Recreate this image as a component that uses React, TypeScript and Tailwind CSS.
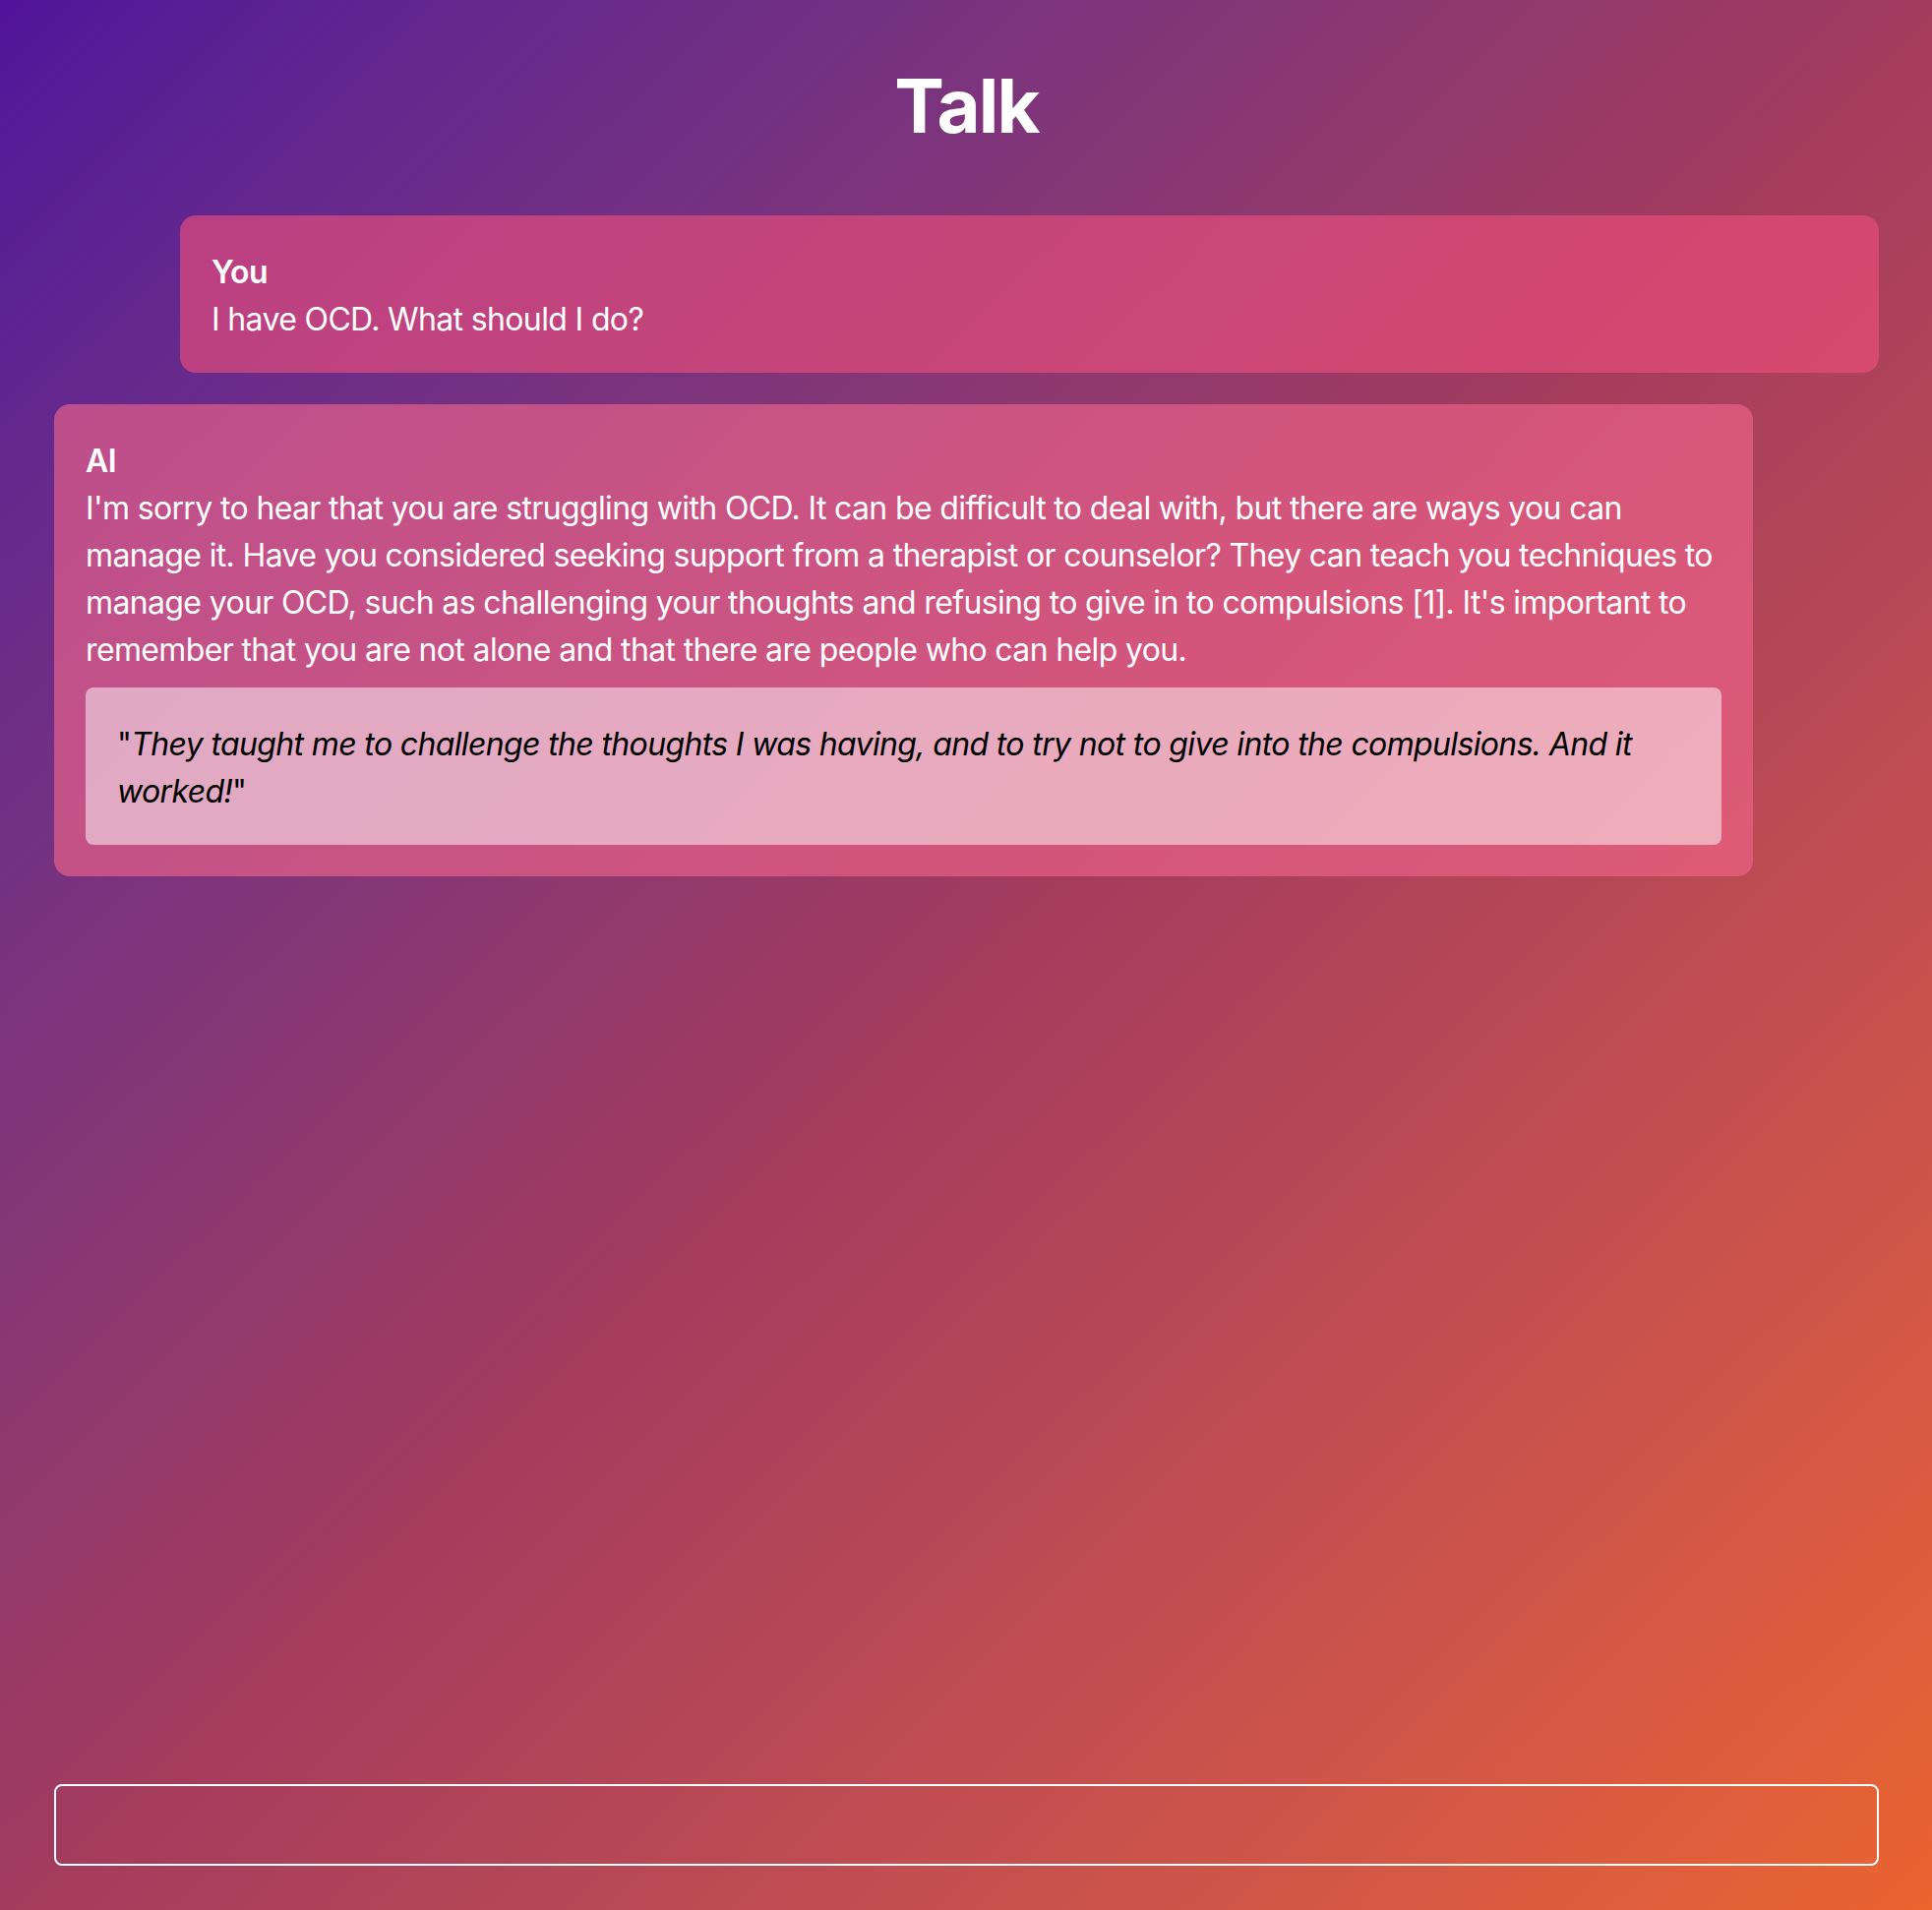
type Message = {
  author: string;
  text: string;
  quote?: string;
};

const messages: Message[] = [
  { author: "You", text: "I have OCD. What should I do?" },
  {
    author: "AI",
    text: "I'm sorry to hear that you are struggling with OCD. It can be difficult to deal with, but there are ways you can manage it. Have you considered seeking support from a therapist or counselor? They can teach you techniques to manage your OCD, such as challenging your thoughts and refusing to give in to compulsions [1]. It's important to remember that you are not alone and that there are people who can help you.",
    quote:
      "They taught me to challenge the thoughts I was having, and to try not to give into the compulsions. And it worked!",
  },
];

function Bubble({ message }: { message: Message }) {
  const mine = message.author === "You";
  return (
    <div
      className={
        mine
          ? "ml-32 rounded-2xl bg-[rgba(237,79,124,0.63)] px-8 pt-[34px] pb-[30px]"
          : "mr-32 rounded-2xl bg-[rgba(240,102,140,0.63)] px-8 pt-[34px] pb-[30px]"
      }
    >
      <div className="font-semibold">{message.author}</div>
      <div>{message.text}</div>
      {message.quote && (
        <div className="mt-[14px] mb-[2px] rounded-lg bg-white/50 px-8 pt-[34px] pb-[30px] text-black">
          "<i>{message.quote}</i>"
        </div>
      )}
    </div>
  );
}

export default function App() {
  return (
    <div className="flex min-h-screen flex-col bg-linear-to-br from-[#52129b] via-[#a33b5e] to-[#eb642e] pr-[54px] pl-[55px] font-['Inter',sans-serif] text-[32px] leading-[48px] tracking-[-0.02em] text-white">
      <h1 className="mt-[69px] mb-[74px] text-center text-[76px] leading-none font-bold tracking-tight">Talk</h1>
      <div className="flex flex-1 flex-col gap-8">
        {messages.map((m, i) => (
          <Bubble key={i} message={m} />
        ))}
      </div>
      <input
        type="text"
        className="mb-[45px] h-[83px] w-full rounded-lg border-2 border-white bg-transparent px-6 text-white outline-none"
      />
    </div>
  );
}
